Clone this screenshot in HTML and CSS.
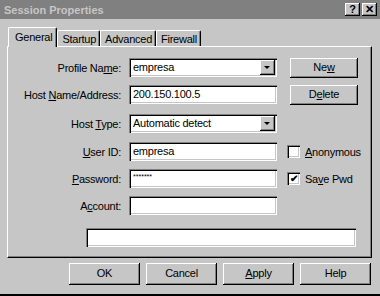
FILE: index.html
```html
<!DOCTYPE html>
<html>
	<head>
		<meta charset="utf-8" />
		<title>Session Properties</title>
		<link rel="stylesheet" href="styles.css">
	</head>
	<body>
		<div class="win">
			<div class="title">
				<span class="caption">Session Properties</span>
				<span class="tbtn">?</span>
				<span class="tbtn x">&#x2715;</span>
			</div>
			<div class="tabs">
				<div class="tab sel">General</div>
				<div class="tab">Startup</div>
				<div class="tab">Advanced</div>
				<div class="tab">Firewall</div>
			</div>
			<div class="panel">
				<div class="row">
					<div class="lbl">Profile Na<u>m</u>e:</div>
					<div class="field combo">empresa<span class="arrow"></span></div>
					<div class="btn side">Ne<u>w</u></div>
				</div>
				<div class="row">
					<div class="lbl">Host <u>N</u>ame/Address:</div>
					<div class="field">200.150.100.5</div>
					<div class="btn side">D<u>e</u>lete</div>
				</div>
				<div class="row r3">
					<div class="lbl">Host <u>T</u>ype:</div>
					<div class="field combo">Automatic detect<span class="arrow"></span></div>
				</div>
				<div class="row">
					<div class="lbl"><u>U</u>ser ID:</div>
					<div class="field">empresa</div>
					<div class="chk"><span class="box"></span><u>A</u>nonymous</div>
				</div>
				<div class="row">
					<div class="lbl"><u>P</u>assword:</div>
					<div class="field pwd">*******</div>
					<div class="chk"><span class="box on">&#x2714;</span>Sa<u>v</u>e Pwd</div>
				</div>
				<div class="row">
					<div class="lbl">A<u>c</u>count:</div>
					<div class="field"></div>
				</div>
				<div class="row wide">
					<div class="field long"></div>
				</div>
			</div>
			<div class="buttons">
				<div class="btn">OK</div>
				<div class="btn">Cancel</div>
				<div class="btn"><u>A</u>pply</div>
				<div class="btn">Help</div>
			</div>
		</div>
	</body>
</html>
```

FILE: styles.css
```css
html,body
{
	margin: 0;
	padding: 0;
	background-color: #c6c6c6;
}

body
{
	font-family: "Liberation Sans", Arial, sans-serif;
	font-size: 11px;
	letter-spacing: -0.25px;
	color: #000;
}

.win
{
	width: 380px;
	height: 296px;
	box-sizing: border-box;
	border-bottom: 2px solid #000;
}

.title
{
	height: 19px;
	background-color: #808080;
	display: flex;
	align-items: center;
	padding: 0 3px 0 4px;
}

.caption
{
	flex: 1;
	color: #c6c6c6;
	font-weight: bold;
	letter-spacing: 0;
}

.tbtn
{
	width: 15px;
	height: 13px;
	background-color: #c6c6c6;
	box-shadow: inset -1px -1px #000, inset 1px 1px #fff, inset -2px -2px #808080;
	font-weight: bold;
	line-height: 13px;
	text-align: center;
}

.tbtn.x
{
	margin-left: 2px;
}

.tabs
{
	display: flex;
	align-items: flex-end;
	height: 27px;
	padding-left: 8px;
}

.tab
{
	height: 15px;
	padding: 0 3px 0 4px;
	line-height: 16px;
	border-top: 1px solid #fff;
	border-left: 1px solid #fff;
	border-right: 1px solid #000;
	box-shadow: inset -1px 0 #808080;
	border-radius: 2px 2px 0 0;
}

.tab.sel
{
	height: 19px;
	padding: 0 4px 0 6px;
	margin-bottom: -1px;
	position: relative;
	z-index: 1;
	background-color: #c6c6c6;
	line-height: 18px;
}

.panel
{
	display: flex;
	flex-direction: column;
	margin: 0 8px 0 7px;
	height: 212px;
	border-top: 1px solid #fff;
	border-left: 1px solid #fff;
	border-right: 1px solid #000;
	border-bottom: 1px solid #000;
	box-shadow: inset -1px -1px #808080;
	box-sizing: border-box;
	padding-top: 11px;
}

.row
{
	display: flex;
	align-items: center;
	height: 19px;
	margin-bottom: 8px;
}

.row.r3
{
	margin-top: 2px;
	margin-bottom: 9px;
}

.row.wide
{
	margin-top: 5px;
	padding-left: 78px;
}

.lbl
{
	width: 113px;
	text-align: right;
	padding-right: 8px;
}

.field
{
	width: 148px;
	height: 19px;
	box-sizing: border-box;
	background-color: #fff;
	box-shadow: inset 1px 1px #808080, inset 2px 2px #000, inset -1px -1px #fff, inset -2px -2px #c6c6c6;
	padding: 3px 4px 0 4px;
	position: relative;
}

.field.long
{
	width: 270px;
}

.field.pwd
{
	font-size: 7px;
	padding-top: 4px;
	letter-spacing: 0;
}

.arrow
{
	position: absolute;
	right: 2px;
	top: 2px;
	width: 15px;
	height: 15px;
	box-sizing: border-box;
	background-color: #c6c6c6;
	box-shadow: inset -1px -1px #000, inset 1px 1px #fff, inset -2px -2px #808080;
}

.arrow:after
{
	content: "";
	position: absolute;
	left: 4px;
	top: 6px;
	border-left: 3px solid transparent;
	border-right: 3px solid transparent;
	border-top: 3px solid #000;
}

.btn
{
	width: 71px;
	height: 22px;
	box-sizing: border-box;
	background-color: #c6c6c6;
	box-shadow: inset -1px -1px #000, inset 1px 1px #fff, inset -2px -2px #808080;
	text-align: center;
	line-height: 21px;
}

.btn.side
{
	width: 68px;
	height: 20px;
	line-height: 19px;
	margin-left: 13px;
}

.chk
{
	display: flex;
	align-items: center;
	margin-left: 10px;
}

.box
{
	width: 13px;
	height: 13px;
	box-sizing: border-box;
	background-color: #fff;
	box-shadow: inset 1px 1px #808080, inset 2px 2px #000, inset -1px -1px #fff, inset -2px -2px #c6c6c6;
	margin-right: 5px;
	font-size: 10px;
	line-height: 13px;
	text-align: center;
	font-weight: bold;
}

.buttons
{
	display: flex;
	gap: 6px;
	padding: 5px 0 0 69px;
}
```
